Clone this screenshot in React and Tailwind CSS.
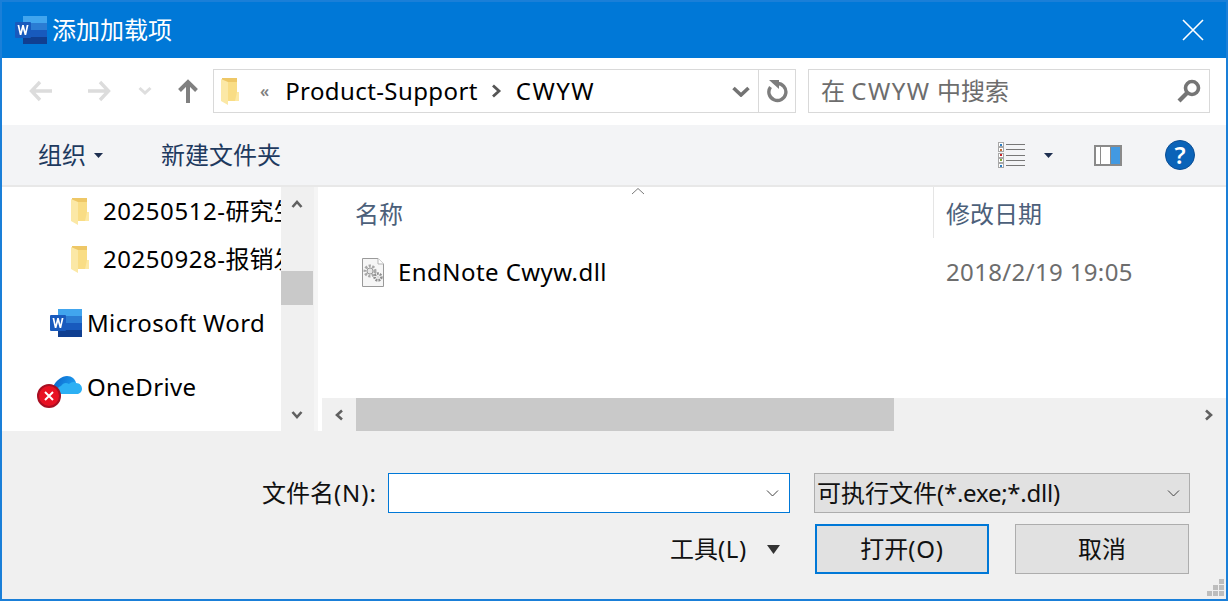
import React from 'react';

const FONT = "font-['Noto_Sans','Noto_Sans_CJK_SC',sans-serif]";

const WordIcon = () => (
  <svg width="32" height="28" viewBox="0 0 32 28" className="shrink-0">
    <rect x="8" y="0" width="24" height="7" fill="#41a5ee" />
    <rect x="8" y="7" width="24" height="7" fill="#2b7cd3" />
    <rect x="8" y="14" width="24" height="7" fill="#185abd" />
    <rect x="8" y="21" width="24" height="7" fill="#103f91" />
    <rect x="0" y="6" width="16" height="16" rx="1" fill="#185abd" />
    <path d="M2.5 9 L4.8 19 L6.4 19 L8 13 L9.6 19 L11.2 19 L13.5 9 L11.7 9 L10.4 15.6 L8.8 9 L7.2 9 L5.6 15.6 L4.3 9 Z" fill="#fff" />
  </svg>
);

const FolderIcon = () => (
  <svg width="19" height="28" viewBox="0 0 19 28" className="shrink-0">
    <path d="M1 1 H16 V24 H1 Z" fill="#eec766" />
    <path d="M7 5 H16 V15 H18 V24 H7 Z" fill="#f9dd85" />
    <path d="M0 2 L7 5 V28 L0 24 Z" fill="#fbe8a6" />
    <path d="M16 15 H18 V24 H14 Z" fill="#fde9a4" />
  </svg>
);

const ChevronStroke = ({ d, color = '#6b6b6b', width = 3, w = 14, h = 10, box = '0 0 14 10' }) => (
  <svg width={w} height={h} viewBox={box} className="shrink-0">
    <path d={d} fill="none" stroke={color} strokeWidth={width} />
  </svg>
);

const Arrow = ({ flip, color }) => (
  <svg width="24" height="22" viewBox="0 0 24 22" className="shrink-0" style={flip ? { transform: 'scaleX(-1)' } : undefined}>
    <path d="M11 2 L2.5 11 L11 20 M3 11 H23" fill="none" stroke={color} strokeWidth="3.4" />
  </svg>
);

const ViewIcon = () => {
  const dots = ['#2f7fc4', '#c4703a', '#c4252a', '#7fa63a', '#2f7fc4'];
  return (
    <div className="flex flex-col w-[27px] h-[26px] justify-between">
      {dots.map((c, i) => (
        <div key={i} className="flex items-center gap-[2px] h-[5px]">
          <div className="w-[6px] h-[5px] border border-[#a8a8a8] bg-white flex items-center justify-center">
            <div className="w-[2px] h-[2px]" style={{ backgroundColor: c }} />
          </div>
          <div className="w-[19px] h-[1px] bg-[#777]" />
        </div>
      ))}
    </div>
  );
};

const CogFile = () => (
  <svg width="22" height="29" viewBox="0 0 22 29" className="shrink-0">
    <path d="M0.5 0.5 H16 L21.5 6 V28.5 H0.5 Z" fill="#f6f6f6" stroke="#9a9a9a" />
    <path d="M16 0.5 V6 H21.5" fill="#fff" stroke="#b5b5b5" />
    <circle cx="8" cy="13" r="5" fill="none" stroke="#a8a8a8" strokeWidth="3" strokeDasharray="2.2 1.4" />
    <circle cx="8" cy="13" r="3" fill="#e6e6e6" stroke="#9c9c9c" />
    <circle cx="16" cy="19" r="3.4" fill="none" stroke="#8f8f8f" strokeWidth="2.6" strokeDasharray="1.9 1" />
    <circle cx="16" cy="19" r="1.6" fill="#ddd" />
  </svg>
);

const TreeFolder = ({ num, label }) => (
  <div className="flex items-center h-[48px] pl-[69px] gap-[13px] whitespace-nowrap">
    <FolderIcon />
    <span className="text-[24px] leading-[32px] text-black">
      <span className="tracking-[0.55px]">{num}</span>{label}
    </span>
  </div>
);

export default function App() {
  return (
    <div className={`w-[1228px] h-[601px] flex flex-col overflow-hidden border-2 border-[#1a7fd8] bg-[#f0f0f0] ${FONT}`}>
      {/* title bar */}
      <div className="h-[56px] shrink-0 bg-[#0078d7] flex items-center pl-[13px] pr-[22px]">
        <WordIcon />
        <span className="ml-[5px] text-[24px] text-white leading-[32px]">添加加载项</span>
        <svg width="22" height="22" viewBox="0 0 22 22" className="ml-auto">
          <path d="M1 1 L21 21 M21 1 L1 21" stroke="#fff" strokeWidth="1.6" />
        </svg>
      </div>

      {/* nav row */}
      <div className="h-[67px] shrink-0 bg-white flex items-center pb-[1px]">
        <div className="w-[211px] flex items-center pl-[27px] shrink-0">
          <Arrow color="#dcdcdc" />
          <div className="w-[34px]" />
          <Arrow flip color="#dcdcdc" />
          <div className="ml-[27px]"><ChevronStroke d="M1.5 2 L7 7 L12.5 2" color="#dedede" /></div>
          <svg width="20" height="24" viewBox="0 0 20 24" className="ml-[26px] shrink-0">
            <path d="M10 24 V3 M1.5 11.5 L10 3 L18.5 11.5" fill="none" stroke="#808080" strokeWidth="4" />
          </svg>
        </div>
        <div className="w-[583px] h-[44px] border border-[#d9d9d9] flex items-center shrink-0">
          <div className="ml-[7px]"><FolderIcon /></div>
          <span className="ml-[20px] text-[16px] font-semibold leading-none text-[#808080]">«</span>
          <span className="ml-[16px] text-[24px] text-black leading-[32px] tracking-[0.4px]">Product-Support</span>
          <span className="ml-[13px] mr-[14px]"><ChevronStroke d="M2 1.5 L8 7 L2 12.5" color="#555" width={2.8} w={11} h={14} box="0 0 11 14" /></span>
          <span className="text-[24px] text-black leading-[32px] tracking-[1.5px]">CWYW</span>
          <div className="ml-auto mr-[8px]"><ChevronStroke d="M1.5 2 L9 9 L16.5 2" color="#737373" width={3.6} w={18} h={11} box="0 0 18 11" /></div>
          <div className="w-[37px] h-full border-l border-[#d9d9d9] flex items-center justify-center">
            <svg width="22" height="24" viewBox="0 0 22 24">
              <path d="M4.5 8 A8.5 8.5 0 1 0 11 4.5" fill="none" stroke="#7d7d7d" strokeWidth="3.4" />
              <path d="M3 1 H13 V10 Z" fill="#7d7d7d" />
            </svg>
          </div>
        </div>
        <div className="ml-[12px] w-[402px] h-[44px] border border-[#d9d9d9] flex items-center pl-[12px] pr-[8px]">
          <span className="text-[24px] text-[#6d6d6d] leading-[32px] whitespace-nowrap">
            在 <span className="tracking-[1.5px]">CWYW</span> 中搜索
          </span>
          <svg width="24" height="24" viewBox="0 0 24 24" className="ml-auto">
            <circle cx="15" cy="9" r="6.5" fill="none" stroke="#757575" strokeWidth="3.6" />
            <path d="M10 14 L2 22" stroke="#757575" strokeWidth="4.2" />
          </svg>
        </div>
      </div>

      {/* toolbar */}
      <div className="h-[62px] shrink-0 bg-[#f3f4f6] border-b-2 border-[#e8e8e8] flex items-center pl-[36px]">
        <span className="text-[24px] text-[#1e3a5f] leading-[32px]">组织</span>
        <svg width="9" height="5" viewBox="0 0 9 5" className="ml-[8px]"><path d="M0 0 H9 L4.5 5 Z" fill="#1e2f50" /></svg>
        <span className="ml-[58px] text-[24px] text-[#1e3a5f] leading-[32px]">新建文件夹</span>
        <div className="ml-auto mr-[31px] flex items-center">
          <ViewIcon />
          <svg width="9" height="5" viewBox="0 0 9 5" className="ml-[19px]"><path d="M0 0 H9 L4.5 5 Z" fill="#1e2f50" /></svg>
          <div className="ml-[41px] w-[28px] h-[21px] border-2 border-[#8a8a8a] bg-white flex">
            <div className="w-[5px] border-r border-[#8a8a8a]" />
            <div className="w-[10px] border-r border-[#8a8a8a]" />
            <div className="flex-1 bg-[#4299e1]" />
          </div>
          <div className="ml-[43px] w-[30px] h-[30px] rounded-full bg-[#0a63b8] border border-[#0b4e94] flex items-center justify-center text-white text-[24px] font-semibold leading-none">?</div>
        </div>
      </div>

      {/* main */}
      <div className="h-[244px] shrink-0 flex bg-white">
        <div className="w-[279px] shrink-0 overflow-hidden flex flex-col">
          <TreeFolder num="20250512-" label="研究生" />
          <TreeFolder num="20250928-" label="报销发" />
          <div className="h-[16px]" />
          <div className="flex items-center h-[48px] pl-[48px] gap-[6px] whitespace-nowrap">
            <WordIcon />
            <span className="text-[24px] leading-[32px] text-black -ml-[1px] tracking-[0.35px]">Microsoft Word</span>
          </div>
          <div className="flex items-center h-[48px] mt-[16px] pl-[48px] gap-[5px] whitespace-nowrap relative">
            <svg width="32" height="23" viewBox="0 0 32 23" className="shrink-0 -mt-[3px]">
              <defs>
                <linearGradient id="cloudTop" x1="0" y1="0" x2="1" y2="0.4">
                  <stop offset="0" stopColor="#0a62c8" />
                  <stop offset="1" stopColor="#1c9df0" />
                </linearGradient>
              </defs>
              <path d="M3 13 C6 6 12 2 17 2 C22 2 25 5 26 9 L14 20 H4 Z" fill="url(#cloudTop)" />
              <path d="M9 20 C6 20 6 13 11 12 C13 9 16 8 19 10 C21 8 24 7 26 9 C30 9 32 12 32 15 C32 18 29 20 27 20 Z" fill="#2cb0f4" />
            </svg>
            <span className="text-[24px] leading-[32px] text-black tracking-[0.38px]">OneDrive</span>
            <div className="absolute left-[35px] top-[21px] w-[24px] h-[24px] rounded-full bg-[#e81123] border-2 border-[#a80f22] flex items-center justify-center">
              <svg width="10" height="10" viewBox="0 0 10 10"><path d="M1 1 L9 9 M9 1 L1 9" stroke="#fff" strokeWidth="2" /></svg>
            </div>
          </div>
        </div>

        {/* tree scrollbar */}
        <div className="w-[33px] shrink-0 bg-[#f0f0f0] flex flex-col items-center justify-between">
          <div className="w-full flex flex-col">
            <div className="h-[33px] flex items-center justify-center pr-[1px]"><ChevronStroke d="M1.5 8 L6 3 L10.5 8" color="#606060" width={2.6} w={12} h={10} box="0 0 12 10" /></div>
            <div className="h-[51px]" />
            <div className="h-[34px] w-[32px] bg-[#c9c9c9]" />
          </div>
          <div className="h-[33px] flex items-center justify-center pr-[1px]"><ChevronStroke d="M1.5 2 L6 7 L10.5 2" color="#606060" width={2.6} w={12} h={10} box="0 0 12 10" /></div>
        </div>
        <div className="w-[4px] shrink-0 bg-[#f5f5f5]" />

        {/* file list */}
        <div className="flex-1 flex flex-col relative min-w-0">
          <svg width="14" height="8" viewBox="0 0 14 8" className="absolute left-[313px] top-0">
            <path d="M1 7 L7 1.5 L13 7" fill="none" stroke="#7a7a7a" strokeWidth="1" />
          </svg>
          <div className="h-[51px] shrink-0 flex items-center">
            <div className="w-[616px] h-full pl-[37px] border-r border-[#e5e5e5] flex items-center">
              <span className="text-[24px] text-[#4c607a] leading-[32px] mt-[2px]">名称</span>
            </div>
            <span className="ml-[12px] text-[24px] text-[#4c607a] leading-[32px] mt-[2px]">修改日期</span>
          </div>
          <div className="h-[48px] shrink-0 flex items-center mt-[10px]">
            <div className="w-[616px] pl-[44px] flex items-center gap-[14px]">
              <CogFile />
              <span className="text-[24px] text-black leading-[32px] tracking-[0.44px]">EndNote Cwyw.dll</span>
            </div>
            <span className="ml-[12px] text-[24px] text-[#6d6d6d] leading-[32px] tracking-[0.35px]">2018/2/19 19:05</span>
          </div>
          <div className="mt-auto ml-[4px] h-[33px] bg-[#f0f0f0] flex items-center">
            <div className="w-[34px] flex items-center justify-center"><ChevronStroke d="M8 1.5 L3 6 L8 10.5" color="#606060" width={2.6} w={10} h={12} box="0 0 10 12" /></div>
            <div className="w-[538px] h-full bg-[#c9c9c9]" />
            <div className="ml-auto w-[34px] flex items-center justify-center"><ChevronStroke d="M2 1.5 L7 6 L2 10.5" color="#606060" width={2.6} w={10} h={12} box="0 0 10 12" /></div>
          </div>
        </div>
      </div>

      {/* bottom */}
      <div className="flex-1 relative bg-[#f0f0f0] flex flex-col pt-[41px] pr-[36px]">
        <div className="flex items-center justify-end h-[41px]">
          <span className="text-[24px] text-[#111] leading-[32px]">文件名<span className="tracking-[1px]">(N):</span></span>
          <div className="ml-[11px] w-[402px] h-[40px] bg-white border border-[#0078d7] flex items-center justify-end pr-[10px]">
            <ChevronStroke d="M1 1.5 L6.5 7 L12 1.5" color="#444" width={1} w={13} h={8} box="0 0 13 8" />
          </div>
          <div className="ml-[24px] w-[376px] h-[40px] bg-[#e1e1e1] border border-[#adadad] flex items-center pl-[2px] pr-[9px]">
            <span className="text-[24px] text-[#111] leading-[32px] whitespace-nowrap">可执行文件<span className="tracking-[-0.25px]">(*.exe;*.dll)</span></span>
            <div className="ml-auto"><ChevronStroke d="M1 1.5 L6.5 7 L12 1.5" color="#444" width={1} w={13} h={8} box="0 0 13 8" /></div>
          </div>
        </div>
        <div className="flex items-center justify-end mt-[11px] h-[50px] pr-[1px]">
          <span className="text-[24px] text-[#111] leading-[32px]">工具<span className="tracking-[0.7px]">(L)</span></span>
          <svg width="13" height="9" viewBox="0 0 13 9" className="ml-[20px]"><path d="M0 0 H13 L6.5 9 Z" fill="#333" /></svg>
          <div className="ml-[35px] w-[174px] h-[50px] bg-[#e1e1e1] border-2 border-[#0078d7] flex items-center justify-center text-[24px] text-[#111]">打开<span className="tracking-[0.8px]">(O)</span></div>
          <div className="ml-[26px] w-[174px] h-[50px] bg-[#e1e1e1] border border-[#adadad] flex items-center justify-center text-[24px] text-[#111]">取消</div>
        </div>
        <svg width="18" height="18" viewBox="0 0 18 18" className="absolute right-[1px] bottom-[2px]">
          <g fill="#bdbdbd">
            <rect x="12" y="0" width="5" height="5" /><rect x="6" y="6" width="5" height="5" /><rect x="12" y="6" width="5" height="5" />
            <rect x="0" y="12" width="5" height="5" /><rect x="6" y="12" width="5" height="5" /><rect x="12" y="12" width="5" height="5" />
          </g>
        </svg>
      </div>
    </div>
  );
}
